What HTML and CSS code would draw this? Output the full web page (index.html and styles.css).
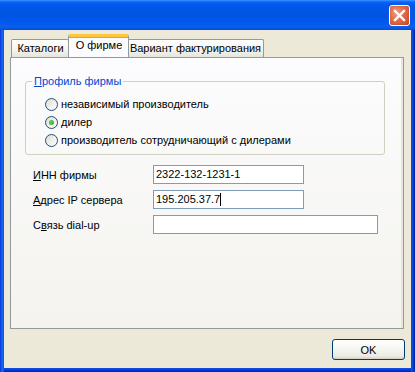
FILE: index.html
```html
<!DOCTYPE html>
<html>
  <head>
    <title>Свойства</title>
    <link rel="stylesheet" href="styles.css">
  </head>
  <body>
    <div class="window">
      <div class="titlebar">
        <button class="close-btn" title="Закрыть">
          <svg width="13" height="13" viewBox="0 0 13 13">
            <path d="M2 2 L11 11 M11 2 L2 11" stroke="#fff" stroke-width="2.4" stroke-linecap="square" fill="none" />
          </svg>
        </button>
      </div>
      <div class="client">
        <div class="tabs">
          <div class="tab tab-catalogs">Каталоги</div>
          <div class="tab tab-active tab-firm">О фирме</div>
          <div class="tab tab-billing">Вариант фактурирования</div>
        </div>
        <div class="panel">
          <fieldset class="group">
            <legend><u>П</u>рофиль фирмы</legend>
            <label class="radio"><span class="radio-box"></span>независимый производитель</label>
            <label class="radio"><span class="radio-box checked"></span>дилер</label>
            <label class="radio"><span class="radio-box"></span>производитель сотрудничающий с дилерами</label>
          </fieldset>
          <div class="form">
            <span class="form-label"><u>И</u>НН фирмы</span>
            <div class="field field-short">2322-132-1231-1</div>
            <span class="form-label"><u>А</u>дрес IP сервера</span>
            <div class="field field-short">195.205.37.7<span class="caret"></span></div>
            <span class="form-label">С<u>в</u>язь dial-up</span>
            <div class="field field-long"></div>
          </div>
        </div>
        <div class="footer">
          <button class="ok-btn">OK</button>
        </div>
      </div>
    </div>
  </body>
</html>
```

FILE: styles.css
```css
body {
  margin: 0;
  font-family: "Liberation Sans", Arial, sans-serif;
  font-size: 11px;
  color: #000;
}

.window {
  width: 415px;
  height: 372px;
  box-sizing: border-box;
  padding: 0 4px 4px;
  display: flex;
  flex-direction: column;
  background:
    linear-gradient(to right, #0831d9 0, #166aee 2px, #0a55e4 4px, transparent 4px,
      transparent 411px, #0a55e4 411px, #0842d6 413px, #001ea0 415px),
    linear-gradient(to bottom, #0a55e4 0, #0a55e4 368px, #0a48dd 369px, #0019cf 372px);
}

.titlebar {
  height: 30px;
  margin: 0 -4px;
  padding-right: 5px;
  display: flex;
  align-items: center;
  justify-content: flex-end;
  background: linear-gradient(to bottom, #3d95ff 0, #0a62f5 2px, #0058ee 5px, #0054e3 14px,
    #0058ec 22px, #0a5fef 27px, #0350dd 29px, #0a48dd 30px);
}

.close-btn {
  width: 21px;
  height: 21px;
  padding: 0;
  border: 1px solid #fff;
  border-radius: 3px;
  display: flex;
  align-items: center;
  justify-content: center;
  background: radial-gradient(circle at 35% 35%, #f0a080 0, #e07050 40%, #c8461f 100%);
  box-shadow: inset 0 0 1px #a82a08;
}

.client {
  flex: 1;
  background: #ece9d8;
  padding: 5px 6px 8px;
  display: flex;
  flex-direction: column;
}

.tabs {
  height: 22px;
  display: flex;
  align-items: flex-end;
  padding-left: 1px;
  position: relative;
  z-index: 1;
}

.tab {
  height: 18px;
  box-sizing: border-box;
  border: 1px solid #919b9c;
  border-bottom: none;
  border-radius: 2px 2px 0 0;
  background: linear-gradient(to bottom, #ffffff, #f3f3ef 60%, #e6e5dc);
  line-height: 16px;
  text-align: center;
}

.tab-catalogs {
  width: 58px;
  padding-left: 1px;
}

.tab-billing {
  width: 137px;
  margin-left: -1px;
}

.tab-active {
  height: 23px;
  margin: 0 -1px 0 -1px;
  border-top: 3px solid #ffc83c;
  box-shadow: inset 0 1px 0 #e6a020;
  background: #fcfcfe;
  line-height: 16px;
  position: relative;
  z-index: 2;
}

.tab-firm {
  width: 61px;
  padding: 0 0 3px 1px;
}

.panel {
  height: 272px;
  box-sizing: border-box;
  width: 394px;
  border: 1px solid #919b9c;
  background: linear-gradient(to bottom, #fcfcfe, #f4f3ee);
  padding: 17px 0 0 14px;
  box-shadow: inset -2px 0 0 #e8e6dc;
}

.group {
  width: 360px;
  box-sizing: border-box;
  margin: 0;
  padding: 7px 0 5px 6px;
  border: 1px solid #d0d0bf;
  border-radius: 3px;
}

.group legend {
  color: #0046d5;
  padding: 0 2px;
  line-height: 13px;
}

.radio {
  display: flex;
  align-items: center;
  height: 18px;
  margin-left: 13px;
  gap: 3px;
}

.radio-box {
  width: 13px;
  height: 13px;
  box-sizing: border-box;
  border: 1px solid #1c5180;
  border-radius: 50%;
  background: linear-gradient(135deg, #dcdcd7, #ffffff);
  display: flex;
  align-items: center;
  justify-content: center;
}

.radio-box.checked::after {
  content: "";
  width: 5px;
  height: 5px;
  border-radius: 50%;
  background: radial-gradient(circle at 40% 40%, #5ed85e, #21a121);
}

.form {
  display: grid;
  grid-template-columns: 120px auto;
  row-gap: 6px;
  margin: 10px 0 0 8px;
  align-items: center;
}

.field {
  height: 19px;
  box-sizing: border-box;
  border: 1px solid #7f9db9;
  background: #fff;
  padding-left: 2px;
  line-height: 17px;
  display: flex;
  align-items: center;
}

.field-short {
  width: 151px;
}

.field-long {
  width: 225px;
}

.caret {
  width: 1px;
  height: 13px;
  background: #000;
}

.footer {
  flex: 1;
  display: flex;
  justify-content: flex-end;
  align-items: flex-end;
}

.ok-btn {
  width: 73px;
  height: 21px;
  border: 1px solid #003c74;
  border-radius: 3px;
  background: linear-gradient(to bottom, #ffffff, #f4f4f0 50%, #ecebe6 85%, #d6d0c5);
  font-family: "Liberation Sans", Arial, sans-serif;
  font-size: 11px;
  color: #000;
  padding: 0;
}
```
